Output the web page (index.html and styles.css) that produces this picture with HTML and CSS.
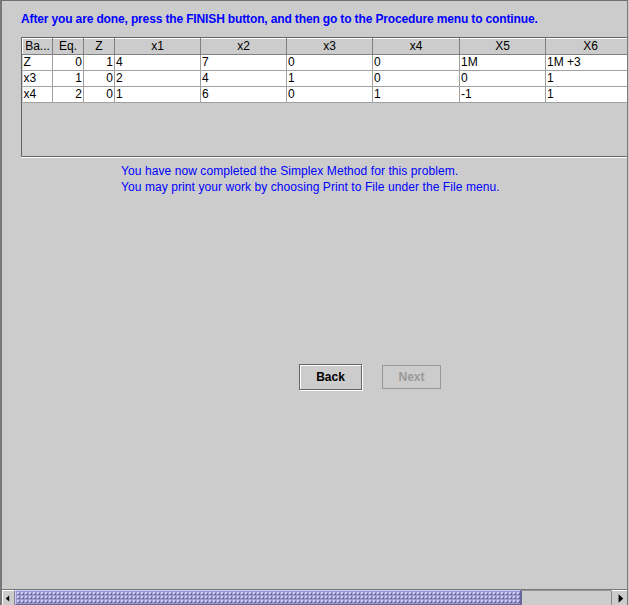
FILE: index.html
```html
<!DOCTYPE html>
<html>
<head>
<meta charset="utf-8">
<link rel="stylesheet" href="styles.css">
</head>
<body>
<div class="frame">
  <div class="content">
    <div class="title">After you are done, press the FINISH button, and then go to the Procedure menu to continue.</div>
    <div class="pane">
      <table class="grid">
        <colgroup>
          <col style="width:30px"><col style="width:31px"><col style="width:31px"><col style="width:86px"><col style="width:86px"><col style="width:86px"><col style="width:87px"><col style="width:86px"><col style="width:90px">
        </colgroup>
        <thead>
          <tr><th>Ba...</th><th>Eq.</th><th>Z</th><th>x1</th><th>x2</th><th>x3</th><th>x4</th><th>X5</th><th>X6</th></tr>
        </thead>
        <tbody>
          <tr><td>Z</td><td class="num">0</td><td class="num">1</td><td>4</td><td>7</td><td>0</td><td>0</td><td>1M</td><td>1M +3</td></tr>
          <tr><td>x3</td><td class="num">1</td><td class="num">0</td><td>2</td><td>4</td><td>1</td><td>0</td><td>0</td><td>1</td></tr>
          <tr><td>x4</td><td class="num">2</td><td class="num">0</td><td>1</td><td>6</td><td>0</td><td>1</td><td>-1</td><td>1</td></tr>
        </tbody>
      </table>
    </div>
    <div class="message">
      <div>You have now completed the Simplex Method for this problem.</div>
      <div>You may print your work by choosing Print to File under the File menu.</div>
    </div>
    <div class="buttons">
      <button class="btn focus">Back</button>
      <button class="btn disabled">Next</button>
    </div>
  </div>
  <div class="hscroll">
    <div class="arrow left"><svg width="16" height="15" viewBox="0 0 16 15"><polygon points="4,7.5 9,3 9,12" fill="#000"/></svg></div>
    <div class="thumb"></div>
    <div class="track"></div>
    <div class="arrow right"><svg width="16" height="15" viewBox="0 0 16 15"><polygon points="12,7.5 7,3 7,12" fill="#000"/></svg></div>
  </div>
</div>
</body>
</html>
```
FILE: styles.css
```css
html, body {
  margin: 0;
  padding: 0;
  background: #cccccc;
}
.frame {
  width: 628px;
  height: 605px;
  box-sizing: border-box;
  border-top: 1px solid #6e6e6e;
  border-left: 2px solid #777777;
  border-right: 1px solid #7a7a7a;
  background: #cccccc;
  display: flex;
  flex-direction: column;
  overflow: hidden;
  font-family: "Liberation Sans", Arial, sans-serif;
}
.content {
  flex: 1;
  display: flex;
  flex-direction: column;
}
.title {
  color: #0000ff;
  font-weight: bold;
  font-size: 12px;
  line-height: 14px;
  letter-spacing: -0.14px;
  padding: 11px 0 0 19px;
  height: 25px;
  white-space: nowrap;
}
.pane {
  margin-left: 19px;
  width: 640px;
  height: 118px;
  border-top: 1px solid #666666;
  border-left: 1px solid #666666;
  border-bottom: 1px solid #666666;
  box-shadow: 0 1px 0 #ffffff;
  background: #cccccc;
  overflow: hidden;
}
.grid {
  border-collapse: collapse;
  table-layout: fixed;
  width: 613px;
  font-size: 12px;
  color: #000;
}
.grid th {
  height: 16px;
  box-sizing: border-box;
  padding: 0;
  font-weight: normal;
  text-align: center;
  background: #cccccc;
  border-top: 1px solid #ffffff;
  border-left: 1px solid #ffffff;
  border-right: 1px solid #808080;
  border-bottom: 1px solid #808080;
  line-height: 13px;
  white-space: nowrap;
  overflow: hidden;
}
.grid td {
  height: 16px;
  box-sizing: border-box;
  padding: 0 1px;
  background: #ffffff;
  border-right: 1px solid #a0a0a0;
  border-bottom: 1px solid #a0a0a0;
  line-height: 15px;
  white-space: nowrap;
  overflow: hidden;
}
.grid td.num {
  text-align: right;
}
.message {
  color: #0000ff;
  font-size: 12px;
  line-height: 16px;
  letter-spacing: 0.08px;
  padding: 6px 0 0 119px;
  white-space: nowrap;
}
.buttons {
  display: flex;
  gap: 20px;
  padding: 169px 0 0 297px;
  align-items: flex-start;
}
.btn {
  font-family: "Liberation Sans", Arial, sans-serif;
  font-weight: bold;
  font-size: 12px;
  height: 25px;
  padding: 0;
  margin: 0;
  background: #cccccc;
}
.btn.focus {
  width: 63px;
  height: 26px;
  color: #000;
  border: 1px solid #666666;
  box-shadow: inset 1px 1px 0 #ffffff, 1px 1px 0 #ffffff;
}
.btn.disabled {
  width: 59px;
  margin-top: 1px;
  height: 24px;
  color: #999999;
  border: 1px solid #999999;
}
.hscroll {
  height: 16px;
  box-sizing: border-box;
  border-top: 1px solid #777777;
  display: flex;
  background: #cccccc;
}
.arrow {
  width: 13px;
  height: 15px;
  flex: none;
  box-sizing: border-box;
  display: flex;
  align-items: center;
  justify-content: center;
  overflow: hidden;
}
.arrow.left {
  border-top: 1px solid #ffffff;
  border-left: 1px solid #ffffff;
  border-right: 1px solid #888888;
}
.arrow.right {
  width: 16px;
  border-left: 1px solid #888888;
  border-top: 1px solid #ffffff;
}
.thumb {
  width: 506px;
  flex: none;
  box-sizing: border-box;
  border: 1px solid #666699;
  border-top-color: #ccccff;
  border-left-color: #ccccff;
  background-color: #9999cc;
  background-image:
    radial-gradient(circle, #ccccff 0.7px, transparent 0.9px),
    radial-gradient(circle, #666699 0.7px, transparent 0.9px);
  background-size: 4px 4px, 4px 4px;
  background-position: 0 0, 1px 1px;
}
.track {
  flex: 1;
  border-left: 1px solid #666699;
  box-shadow: inset 0 1px 0 #999999;
}
```
